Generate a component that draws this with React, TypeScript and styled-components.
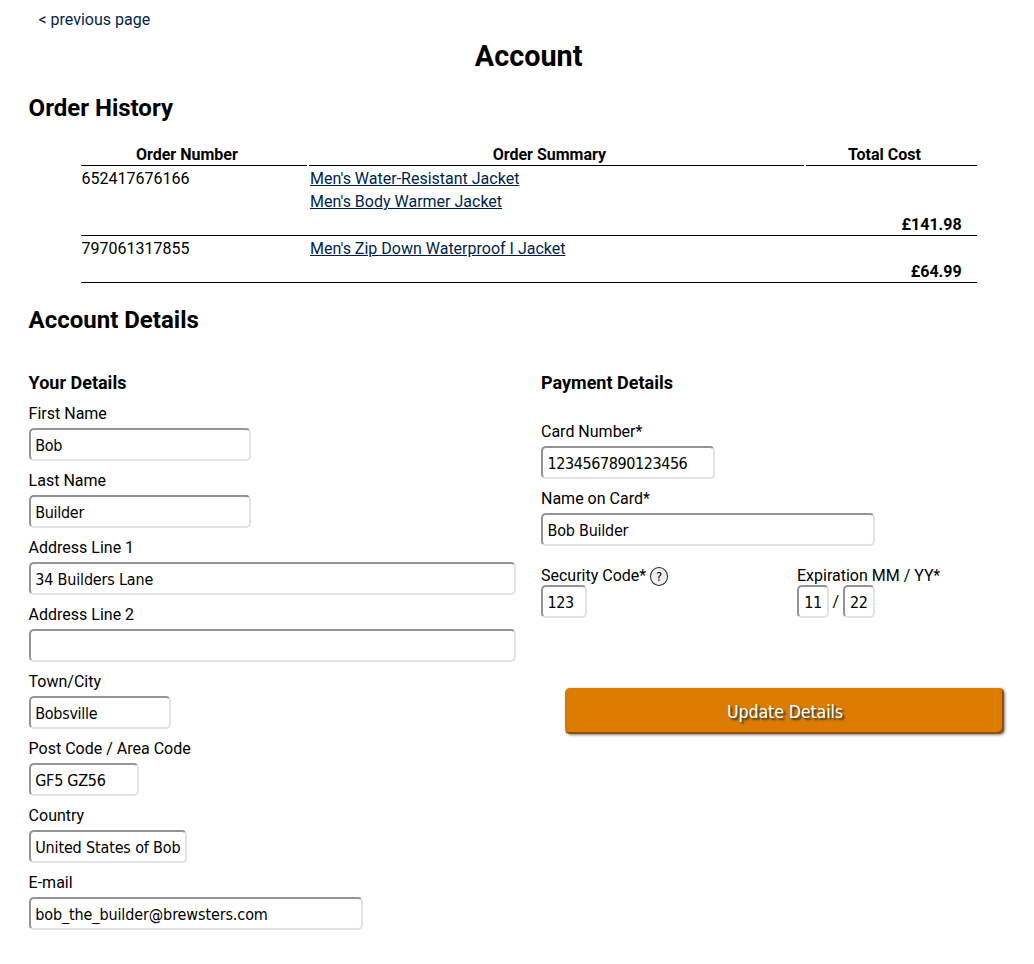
import React from "react";
import styled, { createGlobalStyle } from "styled-components";

const GlobalStyle = createGlobalStyle`
  * { box-sizing: border-box; }
  body {
    margin: 0;
    background: #fff;
    color: #000;
    font: 16px/23px Roboto, "Liberation Sans", sans-serif;
  }
`;

const Page = styled.main`
  height: 964px;
  padding: 8px 5px 0 28.6px;
  overflow: hidden;
`;

const BackLink = styled.a`
  display: block;
  width: max-content;
  margin-left: 9.9px;
  color: #001f4d;
  text-decoration: none;
`;

const Title = styled.h1`
  width: 1000px;
  margin: 6px 0 0;
  text-align: center;
  font-size: 28.8px;
  line-height: 38px;
  font-weight: 700;
`;

const SectionTitle = styled.h2<{ $top: number }>`
  margin: ${(p) => p.$top}px 0 0;
  font-size: 24px;
  line-height: 30px;
  font-weight: 700;
`;

const Orders = styled.section`
  width: 896px;
  margin: 19px 0 0 52px;
`;

const OrderHead = styled.div`
  display: grid;
  grid-template-columns: 226px 495px 171px;
  column-gap: 2px;
`;

const HeadCell = styled.div`
  height: 24px;
  padding: 2px 13.4px 0 0;
  border-bottom: 1px solid #000;
  text-align: center;
  line-height: 22px;
  font-weight: 700;
`;

const OrderRow = styled.div`
  display: grid;
  grid-template-columns: 229.4px 496.6px 155px;
  padding: 0 14px 0 0;
  border-bottom: 1px solid #000;
`;

const OrderNumber = styled.div`
  padding: 1px 0 0 1px;
  height: 23px;
`;

const Items = styled.div`
  display: flex;
  flex-direction: column;
  align-items: flex-start;
  padding-bottom: 23px;
`;

const ItemLink = styled.a`
  height: 23px;
  padding-top: 1px;
  color: #001f4d;
  text-decoration: underline;
`;

const Cost = styled.div`
  align-self: end;
  height: 23px;
  padding-top: 1px;
  text-align: right;
  font-weight: 700;
`;

const Columns = styled.form`
  display: grid;
  grid-template-columns: 512.4px 1fr;
  margin-top: 36px;
`;

const Column = styled.div`
  display: flex;
  flex-direction: column;
`;

const ColumnTitle = styled.h3<{ $gap: number }>`
  margin: 0 0 ${(p) => p.$gap}px;
  font-size: 18px;
  line-height: 24px;
  font-weight: 700;
`;

const Field = styled.div`
  display: flex;
  flex-direction: column;
  align-items: flex-start;
  height: 67px;
`;

const Label = styled.label`
  height: 26px;
`;

const Input = styled.input<{ $w: number; $spacing?: number }>`
  width: ${(p) => p.$w}px;
  height: 33px;
  padding: 1px 0 0 4.6px;
  border: 2px solid;
  border-color: #949494 #e2e2e2 #e2e2e2 #949494;
  border-radius: 5px;
  background: #fff;
  color: #000;
  outline: 0;
  font: 16px "DejaVu Sans Condensed", "DejaVu Sans", sans-serif;
  font-stretch: condensed;
  letter-spacing: ${(p) => p.$spacing ?? -0.42}px;
`;

const CardRow = styled.div`
  display: grid;
  grid-template-columns: 256px 1fr;
  margin-top: 10px;
`;

const CompactLabel = styled.label`
  display: flex;
  align-items: center;
  gap: 4px;
  height: 21px;
  padding-top: 2px;
`;

const Help = styled.span`
  display: grid;
  place-items: center;
  width: 18px;
  height: 19px;
  margin-top: 2px;
  border: 1px solid #222;
  border-radius: 50%;
  background: #efefef;
  font: 13px/17px "DejaVu Sans Condensed", "DejaVu Sans", sans-serif;
`;

const Expiry = styled.div`
  display: flex;
  align-items: center;
  gap: 3.6px;
`;

const DateInput = styled(Input)`
  padding-left: 5.2px;
`;

const UpdateButton = styled.button`
  width: 439px;
  height: 46px;
  margin: 70px 0 0 24px;
  padding: 1px 0 0 1px;
  border: 0;
  border-radius: 5px;
  background: #db7b00;
  box-shadow: inset -2px -2px 0 #964f00, 1px 1px 3px rgba(0, 0, 0, 0.5);
  color: #fff;
  font: 17.6px "DejaVu Sans Condensed", "DejaVu Sans", sans-serif;
  font-stretch: condensed;
  letter-spacing: -0.1px;
  text-shadow: 2px 2px 2px #333;
`;

const orders = [
  {
    number: "652417676166",
    items: ["Men's Water-Resistant Jacket", "Men's Body Warmer Jacket"],
    cost: "£141.98",
  },
  {
    number: "797061317855",
    items: ["Men's Zip Down Waterproof I Jacket"],
    cost: "£64.99",
  },
];

type FieldData = {
  label: string;
  value: string;
  width: number;
  spacing?: number;
};

const personal: FieldData[] = [
  { label: "First Name", value: "Bob", width: 222, spacing: -0.3 },
  { label: "Last Name", value: "Builder", width: 222, spacing: -0.3 },
  { label: "Address Line 1", value: "34 Builders Lane", width: 487, spacing: -0.17 },
  { label: "Address Line 2", value: "", width: 487 },
  { label: "Town/City", value: "Bobsville", width: 142, spacing: -0.28 },
  { label: "Post Code / Area Code", value: "GF5 GZ56", width: 110, spacing: -0.25 },
  { label: "Country", value: "United States of Bob", width: 158, spacing: -0.15 },
  { label: "E-mail", value: "bob_the_builder@brewsters.com", width: 334, spacing: -0.11 },
];

const payment: FieldData[] = [
  { label: "Card Number*", value: "1234567890123456", width: 174 },
  { label: "Name on Card*", value: "Bob Builder", width: 334, spacing: -0.24 },
];

function TextField({ label, value, width, spacing }: FieldData) {
  return (
    <Field>
      <Label htmlFor={label}>{label}</Label>
      <Input id={label} $w={width} $spacing={spacing} defaultValue={value} />
    </Field>
  );
}

export default function App() {
  return (
    <Page>
      <GlobalStyle />
      <BackLink href="#">&lt; previous page</BackLink>
      <Title>Account</Title>
      <SectionTitle $top={18}>Order History</SectionTitle>
      <Orders>
        <OrderHead>
          <HeadCell>Order Number</HeadCell>
          <HeadCell>Order Summary</HeadCell>
          <HeadCell>Total Cost</HeadCell>
        </OrderHead>
        {orders.map((o) => (
          <OrderRow key={o.number}>
            <OrderNumber>{o.number}</OrderNumber>
            <Items>
              {o.items.map((i) => (
                <ItemLink key={i} href="#">{i}</ItemLink>
              ))}
            </Items>
            <Cost>{o.cost}</Cost>
          </OrderRow>
        ))}
      </Orders>
      <SectionTitle $top={22}>Account Details</SectionTitle>
      <Columns>
        <Column>
          <ColumnTitle $gap={7}>Your Details</ColumnTitle>
          {personal.map((f) => (
            <TextField key={f.label} {...f} />
          ))}
        </Column>
        <Column>
          <ColumnTitle $gap={25}>Payment Details</ColumnTitle>
          {payment.map((f) => (
            <TextField key={f.label} {...f} />
          ))}
          <CardRow>
            <div>
              <CompactLabel>
                Security Code* <Help>?</Help>
              </CompactLabel>
              <Input $w={46} defaultValue="123" />
            </div>
            <div>
              <CompactLabel>Expiration MM / YY*</CompactLabel>
              <Expiry>
                <DateInput $w={32} defaultValue="11" />
                /
                <DateInput $w={32} defaultValue="22" />
              </Expiry>
            </div>
          </CardRow>
          <UpdateButton type="button">Update Details</UpdateButton>
        </Column>
      </Columns>
    </Page>
  );
}
